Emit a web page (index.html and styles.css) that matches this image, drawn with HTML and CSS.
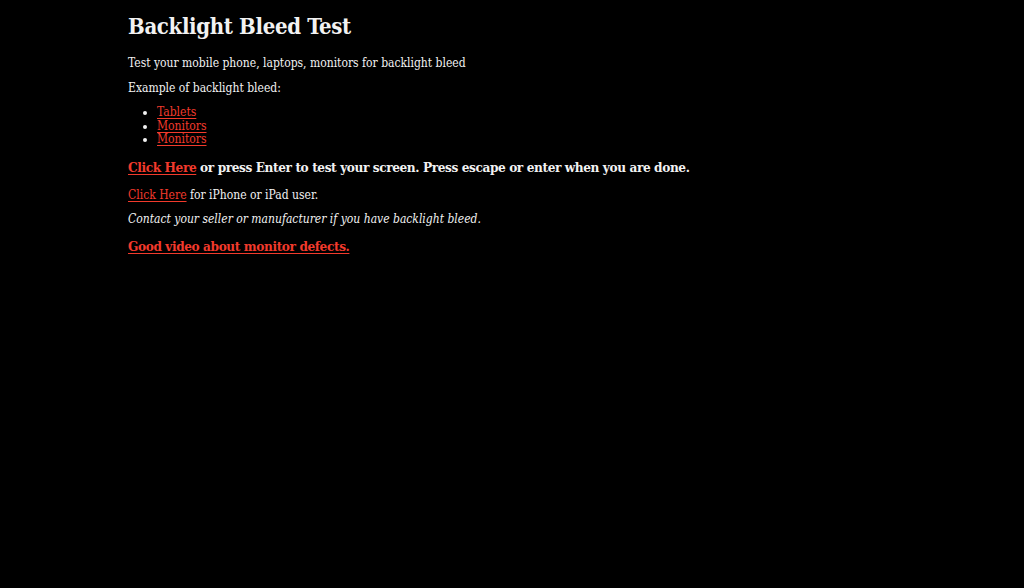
FILE: index.html
```html
<!DOCTYPE html>
<html lang="en">
<head>
  <meta charset="UTF-8" />
  <title>Backlight Bleed Test</title>
  <link rel="stylesheet" href="styles.css">
</head>
<body>
  <div class="container">
    <h1>Backlight Bleed Test</h1>
    <p>Test your mobile phone, laptops, monitors for backlight bleed</p>
    <p>Example of backlight bleed:</p>
    <ul class="examples">
      <li><a href="#">Tablets</a></li>
      <li><a href="#">Monitors</a></li>
      <li><a href="#">Monitors</a></li>
    </ul>
    <h3><a href="#">Click Here</a> or press Enter to test your screen. Press escape or enter when you are done.</h3>
    <p><a href="#">Click Here</a> for iPhone or iPad user.</p>
    <p class="note">Contact your seller or manufacturer if you have backlight bleed.</p>
    <h3 class="video"><a href="#">Good video about monitor defects.</a></h3>
  </div>
</body>
</html>
```

FILE: styles.css
```css
body {
  background: #000;
  color: #f2f2f2;
  font-family: 'DejaVu Serif', serif;
  font-stretch: condensed;
  font-size: 12px;
  line-height: 13.5px;
  margin: 0;
}
.container {
  width: 768px;
  margin: 0 auto;
}
h1 {
  font-size: 22px;
  letter-spacing: -0.35px;
  line-height: 30px;
  margin: 11px 0 16px;
}
p {
  margin: 11px 0;
}
.examples {
  margin: 11px 0;
  padding-left: 29px;
}
h3 {
  font-size: 13.5px;
  letter-spacing: -0.4px;
  line-height: 18px;
  margin: 11px 0 13px;
}
.note {
  font-style: italic;
  margin-bottom: 10px;
}
.video {
  margin-top: 10px;
}
a {
  color: #f23a2c;
  text-underline-offset: 2px;
}
```
